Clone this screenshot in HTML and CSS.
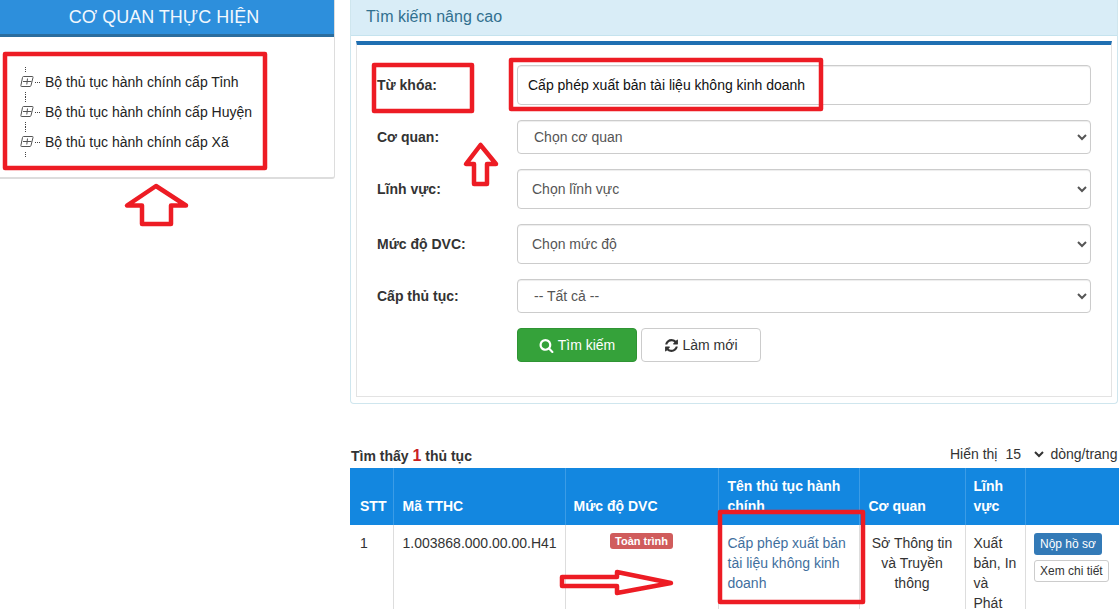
FILE: index.html
```html
<!DOCTYPE html>
<html lang="vi">
<head>
<meta charset="utf-8">
<title>Tìm kiếm nâng cao</title>
<link rel="stylesheet" href="styles.css">
</head>
<body>
<svg class="defs" width="0" height="0" aria-hidden="true">
  <symbol id="tree-node" viewBox="0 0 24 30">
    <path class="tree-dots" d="M5.5 0V5M5.5 25V30M15 15.500H20"/>
    <path class="tree-box" d="M3.500 9.500H12.500Q13.300 9.500 13 10.500L11 18.500Q10.700 19.500 10 19.500H1.500Q.6 19.500 .9 18.500L2.500 10.500Q2.700 9.500 3.500 9.500ZM3 14.500H11.500M7.500 11.500L6.800 17.500"/>
  </symbol>
</svg>
<div class="page">
  <aside class="side">
    <h2 class="side-title">CƠ QUAN THỰC HIỆN</h2>
    <ul class="tree">
      <li class="tree-item"><svg class="tree-icon"><use href="#tree-node"/></svg><span>Bộ thủ tục hành chính cấp Tỉnh</span></li>
      <li class="tree-item"><svg class="tree-icon"><use href="#tree-node"/></svg><span>Bộ thủ tục hành chính cấp Huyện</span></li>
      <li class="tree-item"><svg class="tree-icon"><use href="#tree-node"/></svg><span>Bộ thủ tục hành chính cấp Xã</span></li>
    </ul>
  </aside>
  <main class="main">
    <section class="panel">
      <h3 class="panel-title">Tìm kiếm nâng cao</h3>
      <div class="panel-body">
        <form class="form">
          <div class="row"><label class="label">Từ khóa:</label><input class="control control-tall input" type="text" value="Cấp phép xuất bản tài liệu không kinh doanh"></div>
          <div class="row"><label class="label">Cơ quan:</label><select class="control control-short"><option>Chọn cơ quan</option></select></div>
          <div class="row"><label class="label">Lĩnh vực:</label><select class="control control-tall"><option>Chọn lĩnh vực</option></select></div>
          <div class="row"><label class="label">Mức độ DVC:</label><select class="control control-tall"><option>Chọn mức độ</option></select></div>
          <div class="row"><label class="label">Cấp thủ tục:</label><select class="control control-short"><option>-- Tất cả --</option></select></div>
          <div class="row actions">
            <button class="btn btn-green" type="button"><svg class="btn-icon" viewBox="0 0 1792 1792"><path d="M1216 832q0-185-131.500-316.500t-316.500-131.500-316.500 131.500-131.500 316.500 131.500 316.500 316.500 131.500 316.500-131.500 131.500-316.500zm512 832q0 52-38 90t-90 38q-54 0-90-38l-343-342q-179 124-399 124-143 0-273.500-55.500t-225-150-150-225-55.500-273.500 55.500-273.500 150-225 225-150 273.500-55.500 273.500 55.500 225 150 150 225 55.500 273.500q0 220-124 399l343 343q37 37 37 90z"/></svg>Tìm kiếm</button>
            <button class="btn btn-plain" type="button"><svg class="btn-icon" viewBox="0 0 1792 1792"><path d="M1639 1056q0 5-1 7-64 268-268 434.500t-478 166.500q-146 0-282.500-55t-243.500-157l-129 129q-19 19-45 19t-45-19-19-45v-448q0-26 19-45t45-19h448q26 0 45 19t19 45-19 45l-137 137q71 66 161 102t187 36q134 0 250-65t186-179q11-17 53-117 8-23 30-23h192q13 0 22.500 9.500t9.500 22.500zm25-800v448q0 26-19 45t-45 19h-448q-26 0-45-19t-19-45 19-45l138-138q-148-137-349-137-134 0-250 65t-186 179q-11 17-53 117-8 23-30 23h-199q-13 0-22.500-9.500t-9.500-22.500v-7q65-268 270-434.500t480-166.500q146 0 284 55.500t245 156.500l130-129q19-19 45-19t45 19 19 45z"/></svg>Làm mới</button>
          </div>
        </form>
      </div>
    </section>
    <div class="result-bar">
      <div class="found">Tìm thấy <span class="found-num">1</span> thủ tục</div>
      <div class="paging">Hiển thị <select class="page-size"><option>15</option></select> dòng/trang</div>
    </div>
    <table class="table">
      <colgroup><col class="c-stt"><col class="c-code"><col class="c-level"><col class="c-name"><col class="c-org"><col class="c-field"><col class="c-act"></colgroup>
      <thead>
        <tr><th>STT</th><th>Mã TTHC</th><th class="th-tight">Mức độ DVC</th><th>Tên thủ tục hành chính</th><th>Cơ quan</th><th class="th-tight">Lĩnh vực</th><th></th></tr>
      </thead>
      <tbody>
        <tr>
          <td>1</td>
          <td>1.003868.000.00.00.H41</td>
          <td class="center"><span class="badge">Toàn trình</span></td>
          <td><a class="link" href="#">Cấp phép xuất bản tài liệu không kinh doanh</a></td>
          <td class="center">Sở Thông tin và Truyền thông</td>
          <td class="tight">Xuất bản, In và Phát hành</td>
          <td class="tight"><span class="mini mini-blue">Nộp hồ sơ</span><span class="mini mini-plain">Xem chi tiết</span></td>
        </tr>
      </tbody>
    </table>
  </main>
  <svg class="marks" viewBox="0 0 1119 609" aria-hidden="true">
    <rect x="5" y="54" width="260" height="114"/>
    <rect x="374" y="65" width="98" height="46"/>
    <rect x="511" y="60" width="310" height="49"/>
    <rect x="720" y="512" width="143" height="90"/>
    <path d="M156 186L127 205.500H142V224H171V205.500H186Z"/>
    <path d="M480.500 145L466 164H474V184H487V164H496Z"/>
    <path d="M562 577H617V572L671 583L617 593V586H562Z"/>
  </svg>
</div>
</body>
</html>
```
FILE: styles.css
```css
* { box-sizing: border-box; }
html, body { margin: 0; padding: 0; background: #fff; }
body { font: 14px/20px "Liberation Sans", Arial, sans-serif; color: #333; overflow: hidden; }
.defs { position: absolute; }

.page { position: relative; display: flex; gap: 15px; width: 1119px; height: 609px; overflow: hidden; }
.side { width: 335px; height: 179px; flex: none; border-right: 1px solid #ddd; border-bottom: 2px solid #ddd; border-radius: 0 0 3px 0; }
.side-title { margin: 0; height: 37px; padding-right: 6px; background: #2d8fdc; border-bottom: 3px solid #2b6d9e; color: #f2f8fd; font-size: 18px; font-weight: 400; line-height: 34px; text-align: center; }
.tree { list-style: none; margin: 0; padding: 30px 0 0 20px; }
.tree-item { display: flex; align-items: center; height: 30px; gap: 1px; color: #222; }
.tree-icon { width: 24px; height: 30px; flex: none; }
.tree-dots { fill: none; stroke: #444; stroke-dasharray: 1 1; }
.tree-box { fill: none; stroke: #555; }

.main { width: 769px; flex: none; }
.panel { width: 768px; height: 404px; background: #fff; border: 1px solid #cfe6ee; border-top: 0; border-radius: 0 0 4px 4px; }
.panel-title { margin: 0; height: 36px; padding: 0 15px; background: #d9edf7; border-bottom: 1px solid #c5e3ee; color: #31708f; font-size: 16px; font-weight: 400; line-height: 33px; }
.panel-body { margin: 5px 5px 0; height: 356px; border: 1px solid #e3e3e3; border-top: 4px solid #1f6fb2; padding: 20px; }
.form { display: flex; flex-direction: column; gap: 15px; }
.row { display: flex; align-items: center; }
.label { width: 140px; flex: none; font-weight: 700; color: #333; }
.control { width: 574px; background: #fff; border: 1px solid #ccc; border-radius: 4px; font: 14px "Liberation Sans", Arial, sans-serif; color: #555; padding: 0 10px; box-shadow: inset 0 1px 1px rgba(0,0,0,.075); }
.control-tall { height: 40px; }
.control-short { height: 34px; padding-left: 12px; }
.input { color: #111; }
.actions { padding-left: 140px; gap: 4px; }
.btn { display: flex; align-items: center; justify-content: center; gap: 4px; width: 120px; height: 34px; border-radius: 4px; font: 14px "Liberation Sans", Arial, sans-serif; padding: 0; }
.btn-icon { width: 15px; height: 15px; fill: currentColor; }
.btn-green { background: #35a23a; border: 1px solid #2f9434; color: #fff; }
.btn-plain { background: #fff; border: 1px solid #ccc; color: #333; gap: 3px; }

.result-bar { display: flex; justify-content: space-between; align-items: flex-end; height: 64px; padding: 0 0 2px 1px; }
.found { font-weight: 700; color: #333; }
.found-num { color: #c9201f; font-size: 16px; }
.paging { display: flex; align-items: center; gap: 3px; width: 169px; flex: none; color: #333; white-space: nowrap; padding-bottom: 2px; }
.page-size { width: 47px; height: 20px; border: 0; background: #fff; font: 14px "Liberation Sans", Arial, sans-serif; color: #333; padding: 0 0 0 1px; }

.table { width: 769px; table-layout: fixed; border-collapse: collapse; }
.c-stt { width: 43px; } .c-code { width: 172px; } .c-level { width: 153px; } .c-name { width: 141px; }
.c-org { width: 106px; } .c-field { width: 60px; } .c-act { width: 94px; }
.table th { background: #1387e0; color: #fff; font-weight: 700; text-align: left; vertical-align: bottom; padding: 8px 9px 9px; border-left: 1px solid #3b9ce6; }
.table th:first-child { border-left: 0; padding-left: 10px; }
.table th.th-tight { padding-left: 8px; }
.table td { padding: 8px 9px; vertical-align: top; border-left: 1px solid #ddd; }
.table td:first-child { border-left: 0; padding-left: 10px; }
.table td.tight { padding: 8px 5px 8px 8px; }
.center { text-align: center; }
.badge { display: inline-block; vertical-align: top; background: #d05c5c; color: #fff; font-size: 11px; font-weight: 700; line-height: 16px; padding: 0 5.5px; border-radius: 3px; }
.link { color: #3f6f9e; text-decoration: none; }
.mini { display: block; width: max-content; font-size: 12px; border-radius: 3px; white-space: nowrap; }
.mini-blue { background: #337ab7; color: #fff; line-height: 22px; padding: 0 6.5px; }
.mini-plain { margin-top: 5px; border: 1px solid #ccc; color: #333; line-height: 20px; padding: 0 5.5px; }

.marks { position: absolute; inset: 0; width: 1119px; height: 609px; pointer-events: none; fill: none; stroke: #ed1c24; stroke-width: 4.5; stroke-linejoin: round; }
```
